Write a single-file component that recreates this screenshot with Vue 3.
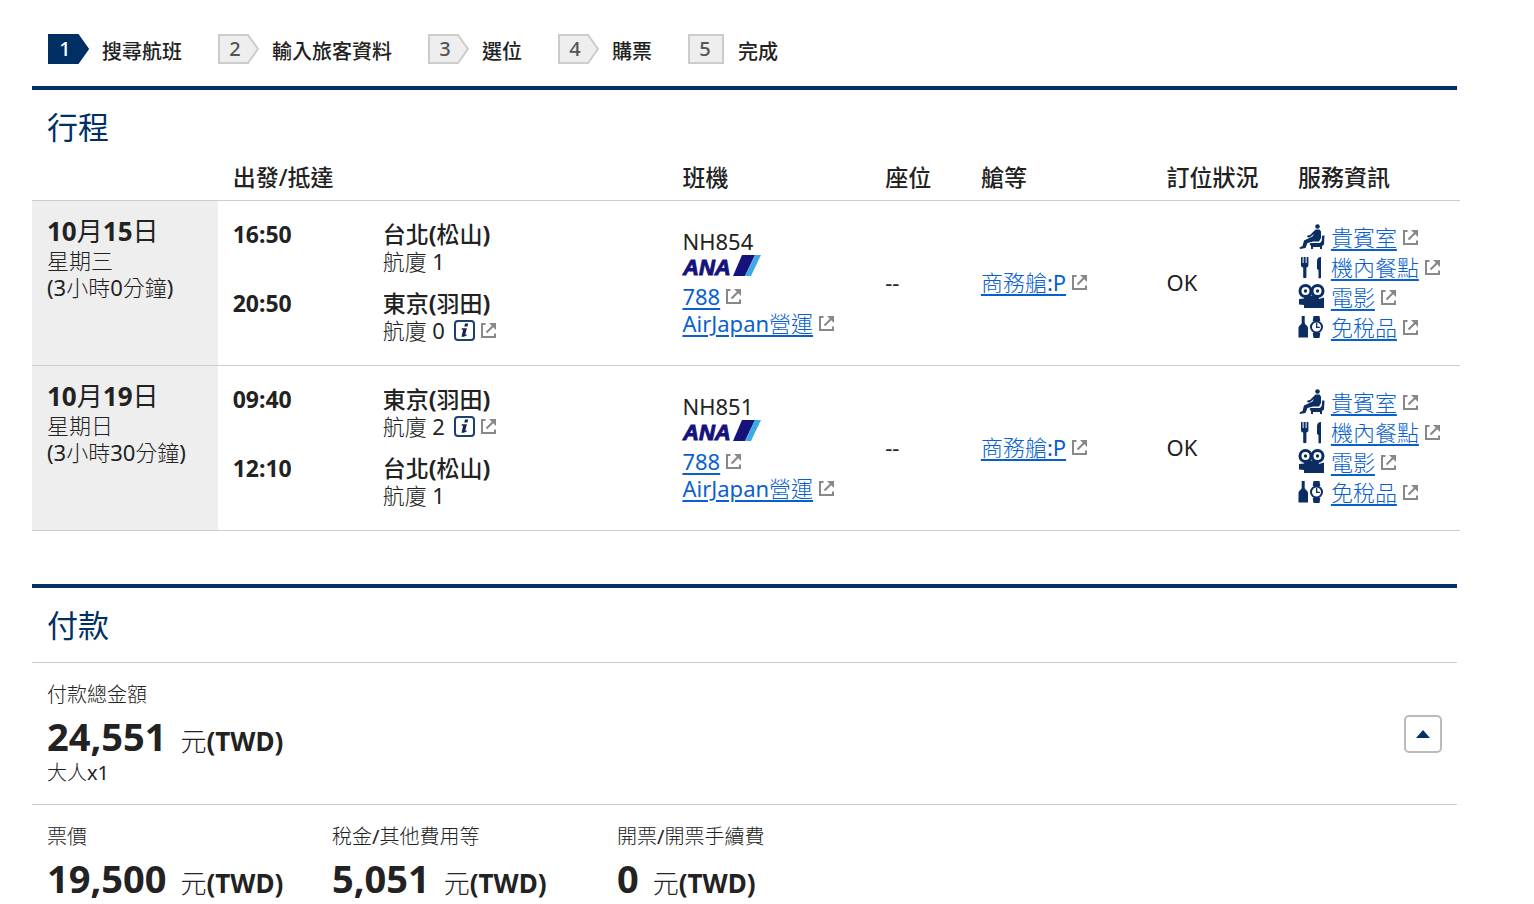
<template>
  <div class="page">

    <!-- STEPS -->
    <ol class="steps">
      <li v-for="(step, i) in steps" :key="step" class="step">
        <svg
          class="badge"
          :class="{ active: i === 0 }"
          :width="i === 4 ? 37 : 41"
          height="30"
        >
          <path v-if="i < 4" d="M1 1H30L40 15L30 29H1Z" />
          <path v-else d="M1 1H35V29H1Z" />
          <text x="17" y="22" text-anchor="middle">{{ i + 1 }}</text>
        </svg>
        <span>{{ step }}</span>
      </li>
    </ol>

    <!-- ITINERARY -->
    <section class="section">
      <h2>行程</h2>

      <table class="flights">
        <colgroup>
          <col class="col-date" />
          <col class="col-legs" />
          <col class="col-flight" />
          <col class="col-seat" />
          <col class="col-cabin" />
          <col class="col-status" />
          <col />
        </colgroup>
        <thead>
          <tr>
            <td></td>
            <th>出發/抵達</th>
            <th>班機</th>
            <th>座位</th>
            <th>艙等</th>
            <th>訂位狀況</th>
            <th>服務資訊</th>
          </tr>
        </thead>
        <tbody>
          <tr v-for="flight in flights" :key="flight.number">
            <td class="date">
              <div class="day">
                <b>10</b>月<b>{{ flight.day }}</b>日
              </div>
              <div>{{ flight.weekday }}</div>
              <div>{{ flight.duration }}</div>
            </td>

            <td class="legs">
              <div v-for="leg in flight.legs" :key="leg.time" class="leg">
                <b>{{ leg.time }}</b>
                <div>
                  <div class="city">{{ leg.city }}<b>(</b>{{ leg.airport }}<b>)</b></div>
                  <div class="line terminal">
                    航廈 {{ leg.terminal }}
                    <a v-if="leg.info" href="#" class="info" aria-label="航廈">
                      <svg width="21" height="21" viewBox="0 0 21 21">
                        <rect x="1" y="1" width="19" height="19" rx="3" fill="#fff" stroke="#1d3f72" stroke-width="2" />
                        <path d="M11 3.6h3.2l-.7 2.8h-3.2zM7.8 8.2h5.1l-1.7 6.6 1.7-.5-.2 1.2-3 1.2H7.5l1.6-6.9-1.6-.3z" fill="#12244f" />
                      </svg>
                      <svg class="ext" width="15" height="15" viewBox="0 0 15 15"><path :d="extBox" /><path :d="extHead" class="head" /></svg>
                    </a>
                  </div>
                </div>
              </div>
            </td>

            <td class="flight">
              <div>{{ flight.number }}</div>
              <svg class="ana" width="79" height="21" role="img" aria-label="ANA">
                <text x="1" y="20">ANA</text>
                <path d="M51 21L60 0H73L63 21Z" fill="#15127c" />
                <path d="M63 21L73 0H79L69 21Z" fill="#3fa9e5" />
              </svg>
              <div class="line">
                <a href="#">788</a>
                <svg class="ext" width="15" height="15" viewBox="0 0 15 15"><path :d="extBox" /><path :d="extHead" class="head" /></svg>
              </div>
              <div class="line">
                <a href="#">AirJapan營運</a>
                <svg class="ext" width="15" height="15" viewBox="0 0 15 15"><path :d="extBox" /><path :d="extHead" class="head" /></svg>
              </div>
            </td>

            <td>--</td>

            <td>
              <div class="line">
                <a href="#">商務艙:P</a>
                <svg class="ext" width="15" height="15" viewBox="0 0 15 15"><path :d="extBox" /><path :d="extHead" class="head" /></svg>
              </div>
            </td>

            <td>OK</td>

            <td>
              <ul class="services">
                <li v-for="service in services" :key="service.name" class="line">
                  <svg class="service-icon" width="27" height="26" viewBox="0 0 27 26">
                    <!-- lounge -->
                    <g v-if="service.icon === 'lounge'">
                      <circle cx="19.5" cy="2.5" r="2.3" />
                      <path d="M17.5 5.500h4l1.500 2V14l-2 3.500h-6L9.500 19l-2 5-5.500 1-.5-1.500 3-1.500 1.500-5.500 8.500-4 1.500-2.500-4.500 3.500-2.500-.5.5-1.500 2.500-.5z" />
                      <path d="M24.200 11.500h2.300l-.5 9-2 1.500v3h-2v-2h-7v2h-2v-3l-1.500-2 1-1h9.500l1.700-2z" />
                    </g>
                    <!-- meal -->
                    <g v-else-if="service.icon === 'meal'">
                      <path d="M3 3h1.600v6h1V3h2v6h1V3h1.800v8c0 1.500-.7 2.200-2 2.500V23c0 1.600-3.200 1.600-3.200 0v-9.500C3.700 13.200 3 12.500 3 11z" />
                      <path d="M19 15V7c.2-2.500 1.500-4 4-4v20.500c0 1.200-2.500 1.200-2.500 0V16z" />
                    </g>
                    <!-- movie -->
                    <g v-else-if="service.icon === 'movie'">
                      <circle cx="7.500" cy="7" r="5.500" class="reel" />
                      <circle cx="19.500" cy="7" r="5.500" class="reel" />
                      <circle cx="7.500" cy="7" r="1.700" />
                      <circle cx="19.500" cy="7" r="1.700" />
                      <path d="M7 11.500h13l1 3.500 5-1.500V24H6v-3L1 20.500v-5.500l5-.5z" />
                    </g>
                    <!-- duty free -->
                    <g v-else>
                      <path d="M3.700 2h3v7c.3 1.700 3.300 2.500 3.300 5v9.500H.5V14c0-2.500 3-3.300 3.200-5z" />
                      <path d="M15.500 2h6l.8 5h-7.600zM14.700 19h7.600l-.8 5h-6z" />
                      <circle cx="18.500" cy="13" r="5.500" class="watch" />
                      <path d="M18 9h1.300v3.700h2.500V14H18z" />
                    </g>
                  </svg>
                  <a href="#">{{ service.name }}</a>
                  <svg class="ext" width="15" height="15" viewBox="0 0 15 15"><path :d="extBox" /><path :d="extHead" class="head" /></svg>
                </li>
              </ul>
            </td>
          </tr>
        </tbody>
      </table>
    </section>

    <!-- PAYMENT -->
    <section class="section payment">
      <h2>付款</h2>

      <div class="total">
        <div>
          <div class="label">付款總金額</div>
          <div class="amount"><b>24,551</b><span>元<b>(TWD)</b></span></div>
          <div class="label">大人x1</div>
        </div>
        <button class="toggle" aria-label="付款" @click="open = !open">
          <svg width="14" height="8" :class="{ closed: !open }"><path d="M7 0L14 8H0Z" /></svg>
        </button>
      </div>

      <div v-if="open" class="breakdown">
        <div v-for="fee in fees" :key="fee.label">
          <div class="label">{{ fee.label }}</div>
          <div class="amount"><b>{{ fee.amount }}</b><span>元<b>(TWD)</b></span></div>
        </div>
      </div>
    </section>

  </div>
</template>

<script setup>
import { ref } from 'vue'

const open = ref(true)

const steps = ['搜尋航班', '輸入旅客資料', '選位', '購票', '完成']

const flights = [
  {
    day: '15',
    weekday: '星期三',
    duration: '(3小時0分鐘)',
    number: 'NH854',
    legs: [
      { time: '16:50', city: '台北', airport: '松山', terminal: 1 },
      { time: '20:50', city: '東京', airport: '羽田', terminal: 0, info: true }
    ]
  },
  {
    day: '19',
    weekday: '星期日',
    duration: '(3小時30分鐘)',
    number: 'NH851',
    legs: [
      { time: '09:40', city: '東京', airport: '羽田', terminal: 2, info: true },
      { time: '12:10', city: '台北', airport: '松山', terminal: 1 }
    ]
  }
]

const services = [
  { name: '貴賓室', icon: 'lounge' },
  { name: '機內餐點', icon: 'meal' },
  { name: '電影', icon: 'movie' },
  { name: '免稅品', icon: 'duty' }
]

const fees = [
  { label: '票價', amount: '19,500' },
  { label: '稅金/其他費用等', amount: '5,051' },
  { label: '開票/開票手續費', amount: '0' }
]

// external link icon
const extBox = 'M4.500 1H1V14H14V10.500M5.500 9.500L12 3'
const extHead = 'M8 0H15V7L13 5L10 2Z'
</script>

<style>
body {
  margin: 0;
  background: #fff;
}
</style>

<style scoped>
.page {
  padding: 34px 77px 0 32px;
  color: #222;
  font-family: "Noto Sans", "Noto Sans CJK TC Light", "Noto Sans CJK TC", sans-serif;
  font-size: 22px;
  font-weight: 400;
  line-height: 27px;
}

b {
  font-weight: 700;
}

a {
  color: #0a5fd0;
  text-decoration: underline;
  text-decoration-thickness: 2px;
  text-underline-offset: 3px;
}

/* STEPS */
.steps {
  display: flex;
  flex-wrap: wrap;
  gap: 36px;
  margin: 0 0 22px;
  padding: 0 16px;
  list-style: none;
}

.step {
  display: flex;
  align-items: center;
  gap: 13px;
  height: 30px;
  font-family: "Noto Sans", "Noto Sans CJK TC", sans-serif;
  font-size: 20px;
  font-weight: 500;
}

.step span {
  padding-top: 4px;
}

.badge path {
  fill: #eee;
  stroke: #ccc;
  stroke-width: 2;
}

.badge text {
  fill: #555;
  font-size: 20px;
  font-weight: 500;
}

.badge.active path {
  fill: #002f63;
  stroke: #002f63;
}

.badge.active text {
  fill: #fff;
}

/* SECTIONS */
.section {
  border-top: 4px solid #003064;
}

h2 {
  margin: 0;
  padding: 16px 15px;
  color: #003064;
  font-family: "Noto Sans", "Noto Sans CJK TC", sans-serif;
  font-size: 31px;
  font-weight: 400;
  line-height: 42px;
}

/* FLIGHTS */
.flights {
  width: calc(100% + 3px);
  border-collapse: collapse;
  table-layout: fixed;
}

.col-date { width: 13%; }
.col-legs { width: 31.5%; }
.col-flight { width: 14.2%; }
.col-seat { width: 6.7%; }
.col-cabin { width: 13%; }
.col-status { width: 9.2%; }

.flights th,
.flights td {
  padding: 0 0 0 15px;
  border-bottom: 1px solid #ccc;
  text-align: left;
  white-space: nowrap;
}

.flights th {
  padding-bottom: 9px;
  font-family: "Noto Sans", "Noto Sans CJK TC", sans-serif;
  font-size: 23px;
  font-weight: 500;
}

.flights tbody tr {
  height: 165px;
}

.flights tbody td {
  padding-bottom: 2px;
}

.flights .date {
  padding-top: 14px;
  background: #eee;
  vertical-align: top;
}

.day {
  font-family: "Noto Sans", "Noto Sans CJK TC", sans-serif;
  font-size: 26px;
  line-height: 32px;
}

.leg {
  display: grid;
  grid-template-columns: 150px 1fr;
}

.leg > b {
  font-size: 23px;
}

.leg + .leg {
  margin-top: 15px;
}

.city {
  font-family: "Noto Sans", "Noto Sans CJK TC", sans-serif;
  font-size: 23px;
  font-weight: 500;
}

.line {
  display: flex;
  align-items: center;
  gap: 6px;
}

.line.terminal {
  gap: 9px;
}

.info {
  display: flex;
  align-items: center;
  gap: 6px;
}

.ext {
  fill: none;
  stroke: #888;
  stroke-width: 2;
}

.ext .head {
  fill: #888;
  stroke: none;
}

.ana {
  display: block;
  margin-bottom: 7px;
  overflow: visible;
}

.ana text {
  fill: #15127c;
  stroke: #15127c;
  stroke-width: 1;
  font-family: "Liberation Sans", Arial, sans-serif;
  font-size: 22px;
  font-style: italic;
  font-weight: 700;
}

/* SERVICES */
.services {
  margin: 0;
  padding: 0;
  list-style: none;
}

.services li {
  height: 30px;
}

.service-icon {
  fill: #0b2d62;
}

.service-icon .reel,
.service-icon .watch {
  fill: #fff;
  stroke: #0b2d62;
  stroke-width: 2;
}

.service-icon .reel {
  stroke-width: 3;
}

/* PAYMENT */
.payment {
  margin-top: 53px;
}

.total {
  display: flex;
  justify-content: space-between;
  align-items: center;
  padding: 21px 15px 20px;
  border-top: 1px solid #ccc;
  border-bottom: 1px solid #ccc;
}

.label {
  font-size: 20px;
  line-height: 22px;
}

.amount {
  display: flex;
  align-items: baseline;
  gap: 14px;
  padding: 5px 0 1px;
  font-size: 38px;
  line-height: 50px;
}

.amount span {
  font-size: 26px;
  line-height: 30px;
}

.toggle {
  display: flex;
  align-items: center;
  justify-content: center;
  width: 38px;
  height: 38px;
  padding: 0;
  border: 2px solid #bbb;
  border-radius: 5px;
  background: #fff;
  cursor: pointer;
}

.toggle svg {
  fill: #002f6c;
}

.toggle .closed {
  transform: rotate(180deg);
}

.breakdown {
  display: grid;
  grid-template-columns: repeat(5, 1fr);
  padding-top: 21px;
}

.breakdown > div {
  padding-left: 15px;
  white-space: nowrap;
}
</style>
